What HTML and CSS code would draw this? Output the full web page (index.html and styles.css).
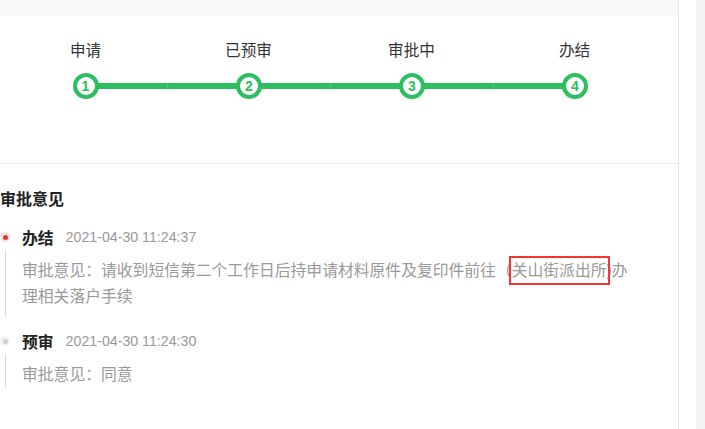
FILE: index.html
```html
<!DOCTYPE html>
<html lang="zh-CN">
<head>
<meta charset="utf-8">
<link rel="stylesheet" href="styles.css">
</head>
<body>
<div class="page">
  <main class="main">
    <div class="top-strip"></div>
    <section class="steps-section">
      <div class="steps">
        <div class="step first">
          <div class="step-label">申请</div>
          <div class="step-track"><span class="step-num">1</span></div>
        </div>
        <div class="step">
          <div class="step-label">已预审</div>
          <div class="step-track"><span class="step-num">2</span></div>
        </div>
        <div class="step">
          <div class="step-label">审批中</div>
          <div class="step-track"><span class="step-num">3</span></div>
        </div>
        <div class="step last">
          <div class="step-label">办结</div>
          <div class="step-track"><span class="step-num">4</span></div>
        </div>
      </div>
    </section>
    <section class="opinions">
      <h2 class="opinions-title">审批意见</h2>
      <div class="timeline">
        <div class="tl-item">
          <div class="tl-rail">
            <div class="tl-dot-row"><span class="tl-dot active"></span></div>
            <div class="tl-line"></div>
          </div>
          <div class="tl-body">
            <div class="tl-head"><span class="tl-status">办结</span><span class="tl-time">2021-04-30 11:24:37</span></div>
            <p class="tl-text">审批意见：请收到短信第二个工作日后持申请材料原件及复印件前往（<span class="mark">关山街派出所</span>)办理相关落户手续</p>
          </div>
        </div>
        <div class="tl-item last">
          <div class="tl-rail">
            <div class="tl-dot-row"><span class="tl-dot"></span></div>
            <div class="tl-line"></div>
          </div>
          <div class="tl-body">
            <div class="tl-head"><span class="tl-status">预审</span><span class="tl-time">2021-04-30 11:24:30</span></div>
            <p class="tl-text">审批意见：同意</p>
          </div>
        </div>
      </div>
    </section>
  </main>
  <div class="gutter"></div>
  <div class="scroll-track"></div>
</div>
</body>
</html>
```
FILE: styles.css
```css
* { box-sizing: border-box; }
html, body { margin: 0; padding: 0; background: #fff; }
body {
  font-family: "Liberation Sans", "Noto Sans CJK SC", sans-serif;
  color: #333;
}
.page {
  display: flex;
  height: 429px;
  overflow: hidden;
}
.main {
  width: 679px;
  flex: none;
  border-right: 1px solid #e6e6e6;
}
.gutter { width: 17px; flex: none; background: #fff; }
.scroll-track { flex: 1; background: #f4f4f4; }

.top-strip { height: 16px; background: #f8f8f8; }

.steps-section {
  height: 148px;
  border-bottom: 1px solid #ececec;
  padding: 25px 0 0 4px;
}
.steps {
  display: grid;
  grid-template-columns: repeat(4, 163px);
}
.step {
  display: flex;
  flex-direction: column;
  align-items: center;
}
.step-label {
  font-size: 15.6px;
  line-height: 20px;
  height: 20px;
  color: #333;
}
.step-track {
  margin-top: 12px;
  width: 100%;
  height: 26px;
  display: flex;
  align-items: center;
  justify-content: center;
}
.step-track::before,
.step-track::after {
  content: "";
  flex: 1;
  height: 6px;
  background: #2dbe60;
}
.step-track::before { margin-right: -2px; }
.step-track::after { margin-left: -2px; }
.step.first .step-track::before,
.step.last .step-track::after { background: transparent; }
.step + .step .step-track::before { border-left: 1px solid #4fca7b; }
.step-num {
  position: relative;
  z-index: 1;
  flex: none;
  width: 26px;
  height: 26px;
  border: 4.5px solid #2dbe60;
  border-radius: 50%;
  background: #fff;
  color: #2dbe60;
  font-size: 14px;
  font-weight: bold;
  display: flex;
  align-items: center;
  justify-content: center;
  line-height: 1;
}

.opinions {
  padding: 25px 43px 0 0;
}
.opinions-title {
  margin: 0;
  font-size: 16px;
  line-height: 22px;
  font-weight: bold;
  color: #222;
}
.timeline { margin-top: 15px; }
.tl-item {
  display: grid;
  grid-template-columns: 10px 1fr;
  column-gap: 12px;
  padding-bottom: 20px;
}
.tl-item.last { padding-bottom: 17px; }
.tl-rail {
  display: flex;
  flex-direction: column;
}
.tl-dot-row {
  height: 22px;
  display: flex;
  align-items: center;
}
.tl-dot {
  width: 10px;
  height: 10px;
  border-radius: 50%;
  background: #f1f1f1;
  display: flex;
  align-items: center;
  justify-content: center;
}
.tl-dot::after {
  content: "";
  width: 5px;
  height: 5px;
  border-radius: 50%;
  background: #d0d0d0;
}
.tl-dot.active { background: #fde2e2; }
.tl-dot.active::after { background: #e8353d; }
.tl-line {
  flex: 1;
  width: 1px;
  margin-left: 5px;
  margin-top: 2px;
  background: #dcdcdc;
}
.tl-item:not(.last) .tl-line { margin-bottom: -7px; }
.tl-head {
  height: 22px;
  display: flex;
  align-items: center;
}
.tl-status {
  font-size: 15.8px;
  font-weight: bold;
  color: #222;
}
.tl-time {
  margin-left: 12px;
  font-size: 14.2px;
  color: #999;
}
.tl-text {
  margin: 10px 0 0;
  font-size: 15.8px;
  line-height: 26px;
  color: #999;
}
.mark {
  position: relative;
}
.mark::after {
  content: "";
  position: absolute;
  left: -3px;
  right: -3px;
  top: -6px;
  bottom: -6px;
  border: 2px solid #f63434;
}
```
